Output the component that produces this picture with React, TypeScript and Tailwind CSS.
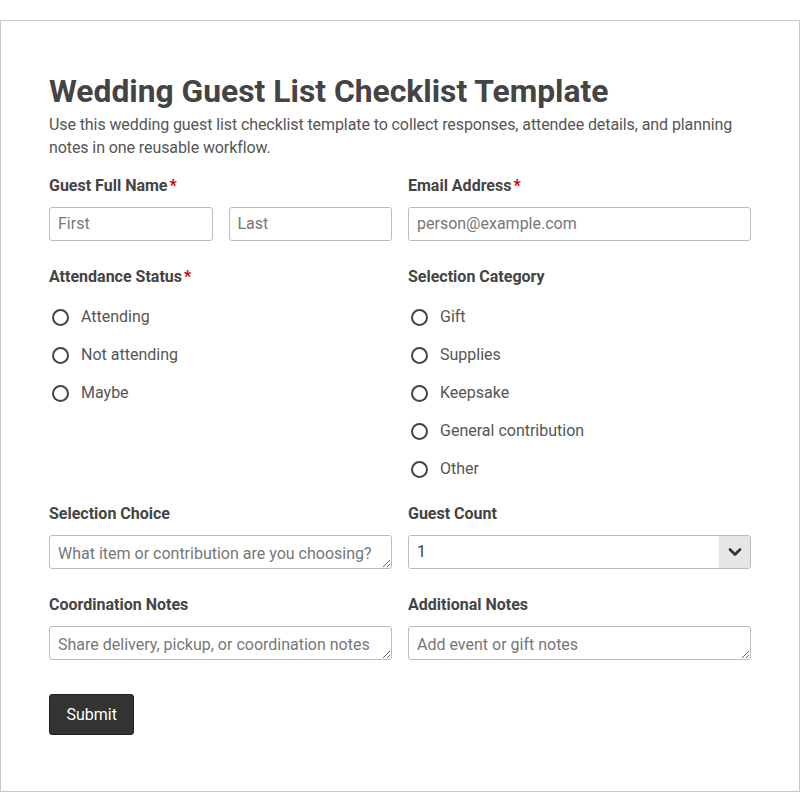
import { ChevronDown } from "lucide-react";

const attendance = ["Attending", "Not attending", "Maybe"];
const categories = ["Gift", "Supplies", "Keepsake", "General contribution", "Other"];

function Label({ text, required }: { text: string; required?: boolean }) {
  return (
    <div className="h-[22px] text-[16px] leading-[22px] font-bold text-[#444]">
      {text}
      {required && <span className="ml-[2px] text-[#c00]">*</span>}
    </div>
  );
}

function Radios({ name, options }: { name: string; options: string[] }) {
  return (
    <div className="mt-[18px] flex flex-col gap-[16px]">
      {options.map((o) => (
        <label key={o} className="flex h-[22px] items-center gap-[12px] pl-[3px] cursor-pointer">
          <input
            type="radio"
            name={name}
            className="h-[17px] w-[17px] appearance-none rounded-full border-2 border-[#444] bg-white checked:border-[5px]"
          />
          <span className="text-[16px] text-[#555]">{o}</span>
        </label>
      ))}
    </div>
  );
}

const inputCls =
  "h-[34px] w-full rounded-[3px] border border-[#bbb] bg-white px-[8px] text-[16px] text-[#444] placeholder:text-[#777] focus:outline-none";

const areaCls = `${inputCls} mt-[10px] block resize-y pt-[8px] pb-[4px] leading-[20px]`;

export default function App() {
  return (
    <div className="pt-[20px] font-['Roboto',sans-serif]">
      <div className="h-[772px] border border-[#c8c8c8] px-[48px] pt-[52px]">
        <h1 className="text-[31.8px] leading-[37px] font-bold text-[#444]">
          Wedding Guest List Checklist Template
        </h1>
        <p className="mt-[3px] text-[16px] leading-[23px] tracking-[-0.09px] text-[#555]">
          Use this wedding guest list checklist template to collect responses, attendee details, and planning
          notes in one reusable workflow.
        </p>

        <div className="mt-[16px] grid grid-cols-2 gap-x-[16px]">
          {/* row 1 */}
          <div>
            <Label text="Guest Full Name" required />
            <div className="mt-[10px] grid grid-cols-2 gap-x-[16px]">
              <input className={`${inputCls} pb-[1px]`} placeholder="First" />
              <input className={`${inputCls} pb-[1px]`} placeholder="Last" />
            </div>
          </div>
          <div>
            <Label text="Email Address" required />
            <input className={`${inputCls} mt-[10px] pb-[1px]`} placeholder="person@example.com" />
          </div>

          {/* row 2 */}
          <div className="mt-[25px]">
            <Label text="Attendance Status" required />
            <Radios name="attendance" options={attendance} />
          </div>
          <div className="mt-[25px]">
            <Label text="Selection Category" />
            <Radios name="category" options={categories} />
          </div>

          {/* row 3 */}
          <div className="mt-[23px]">
            <Label text="Selection Choice" />
            <textarea rows={1} className={areaCls} placeholder="What item or contribution are you choosing?" />
          </div>
          <div className="mt-[23px]">
            <Label text="Guest Count" />
            <div className="relative mt-[10px]">
              <select className={`${inputCls} appearance-none`} defaultValue="1">
                {[1, 2, 3, 4, 5, 6, 7, 8, 9, 10].map((n) => (
                  <option key={n} value={n}>
                    {n}
                  </option>
                ))}
              </select>
              <div className="pointer-events-none absolute right-[1px] top-[1px] flex h-[32px] w-[31px] items-center justify-center rounded-r-[2px] bg-[#e6e6e6]">
                <ChevronDown className="h-[20px] w-[20px] text-[#333]" strokeWidth={3.2} />
              </div>
            </div>
          </div>

          {/* row 4 */}
          <div className="mt-[25px]">
            <Label text="Coordination Notes" />
            <textarea rows={1} className={areaCls} placeholder="Share delivery, pickup, or coordination notes" />
          </div>
          <div className="mt-[25px]">
            <Label text="Additional Notes" />
            <textarea rows={1} className={areaCls} placeholder="Add event or gift notes" />
          </div>
        </div>

        <button className="mt-[34px] h-[41px] rounded-[3px] border border-[#222] bg-[#333] px-[16.5px] text-[16px] text-white">
          Submit
        </button>
      </div>
    </div>
  );
}
